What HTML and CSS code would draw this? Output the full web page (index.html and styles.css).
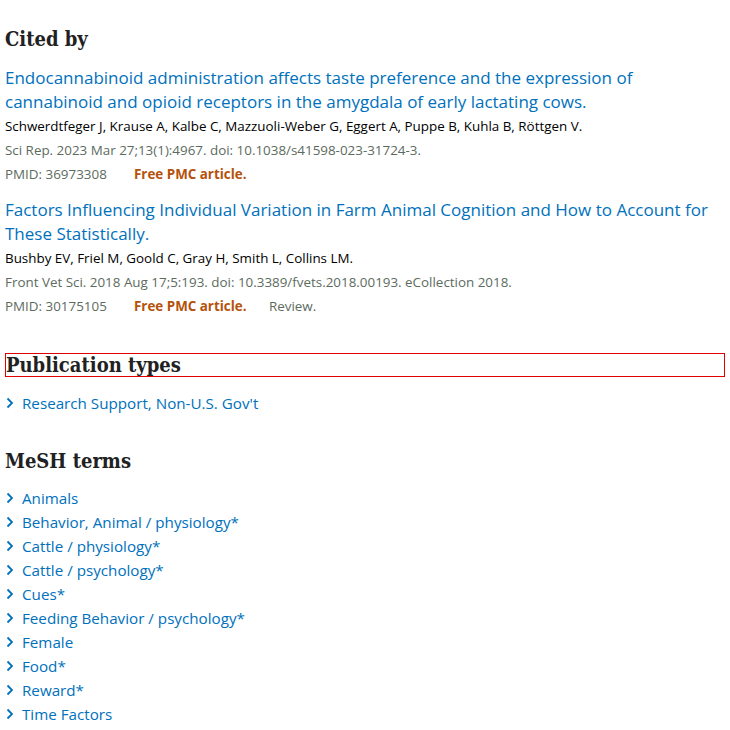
FILE: index.html
```html
<!DOCTYPE html>
<html lang="en">
<head>
<meta charset="utf-8">
<link rel="stylesheet" href="styles.css">
</head>
<body>
<main class="page">
  <section class="section cited">
    <h2 class="heading">Cited by</h2>
    <article class="doc">
      <a class="doc-title" href="#">Endocannabinoid administration affects taste preference and the expression of cannabinoid and opioid receptors in the amygdala of early lactating cows.</a>
      <div class="doc-authors">Schwerdtfeger J, Krause A, Kalbe C, Mazzuoli-Weber G, Eggert A, Puppe B, Kuhla B, Röttgen V.</div>
      <div class="doc-journal">Sci Rep. 2023 Mar 27;13(1):4967. doi: 10.1038/s41598-023-31724-3.</div>
      <div class="doc-meta"><span class="pmid">PMID: 36973308</span><span class="free">Free PMC article.</span></div>
    </article>
    <article class="doc">
      <a class="doc-title" href="#">Factors Influencing Individual Variation in Farm Animal Cognition and How to Account for These Statistically.</a>
      <div class="doc-authors">Bushby EV, Friel M, Goold C, Gray H, Smith L, Collins LM.</div>
      <div class="doc-journal">Front Vet Sci. 2018 Aug 17;5:193. doi: 10.3389/fvets.2018.00193. eCollection 2018.</div>
      <div class="doc-meta"><span class="pmid">PMID: 30175105</span><span class="free">Free PMC article.</span><span class="review">Review.</span></div>
    </article>
  </section>

  <section class="section">
    <h2 class="heading heading-boxed">Publication types</h2>
    <ul class="terms">
      <li><svg class="chev" viewBox="0 0 8 12"><path d="M1.5 1.5 L6 6 L1.5 10.5"/></svg><a href="#">Research Support, Non-U.S. Gov't</a></li>
    </ul>
  </section>

  <section class="section">
    <h2 class="heading">MeSH terms</h2>
    <ul class="terms">
      <li><svg class="chev" viewBox="0 0 8 12"><path d="M1.5 1.5 L6 6 L1.5 10.5"/></svg><a href="#">Animals</a></li>
      <li><svg class="chev" viewBox="0 0 8 12"><path d="M1.5 1.5 L6 6 L1.5 10.5"/></svg><a href="#">Behavior, Animal / physiology*</a></li>
      <li><svg class="chev" viewBox="0 0 8 12"><path d="M1.5 1.5 L6 6 L1.5 10.5"/></svg><a href="#">Cattle / physiology*</a></li>
      <li><svg class="chev" viewBox="0 0 8 12"><path d="M1.5 1.5 L6 6 L1.5 10.5"/></svg><a href="#">Cattle / psychology*</a></li>
      <li><svg class="chev" viewBox="0 0 8 12"><path d="M1.5 1.5 L6 6 L1.5 10.5"/></svg><a href="#">Cues*</a></li>
      <li><svg class="chev" viewBox="0 0 8 12"><path d="M1.5 1.5 L6 6 L1.5 10.5"/></svg><a href="#">Feeding Behavior / psychology*</a></li>
      <li><svg class="chev" viewBox="0 0 8 12"><path d="M1.5 1.5 L6 6 L1.5 10.5"/></svg><a href="#">Female</a></li>
      <li><svg class="chev" viewBox="0 0 8 12"><path d="M1.5 1.5 L6 6 L1.5 10.5"/></svg><a href="#">Food*</a></li>
      <li><svg class="chev" viewBox="0 0 8 12"><path d="M1.5 1.5 L6 6 L1.5 10.5"/></svg><a href="#">Reward*</a></li>
      <li><svg class="chev" viewBox="0 0 8 12"><path d="M1.5 1.5 L6 6 L1.5 10.5"/></svg><a href="#">Time Factors</a></li>
    </ul>
  </section>
</main>
</body>
</html>
```
FILE: styles.css
```css
html, body {
  margin: 0;
  padding: 0;
  background: #fff;
}
body {
  font-family: "Open Sans", "Noto Sans", sans-serif;
  color: #212121;
}
.page {
  padding: 25px 5px 0 5px;
}
.section {
  margin-bottom: 32px;
}
.cited {
  margin-bottom: 35px;
}
.heading {
  font-family: "DejaVu Serif Condensed", "DejaVu Serif", serif;
  font-weight: 700;
  font-size: 20px;
  line-height: 28px;
  margin: 0 0 11px 0;
  color: #212121;
}
.cited .heading {
  margin-bottom: 13px;
}
.heading-boxed {
  border: 1px solid #e00000;
  line-height: 22px;
  margin-bottom: 14px;
}
.doc {
  margin-bottom: 12px;
}
.doc-title {
  display: block;
  color: #0071bc;
  text-decoration: none;
  font-size: 17px;
  line-height: 24px;
}
.doc-authors {
  font-size: 13.4px;
  line-height: 24px;
  color: #000;
}
.doc-journal {
  font-size: 13.4px;
  line-height: 24px;
  color: #5c6b5e;
}
.doc-meta {
  display: flex;
  font-size: 13.4px;
  line-height: 24px;
  color: #5c6b5e;
}
.pmid {
  width: 129px;
}
.free {
  color: #b5520b;
  font-weight: 700;
  width: 135px;
}
.review {
  color: #5c6b5e;
}
.terms {
  list-style: none;
  margin: 0;
  padding: 0;
}
.terms li {
  display: flex;
  align-items: center;
  font-size: 15.2px;
  line-height: 24px;
}
.terms a {
  color: #0071bc;
  text-decoration: none;
}
.chev {
  width: 8px;
  height: 12px;
  margin: 0 8px 0 1px;
  fill: none;
  stroke: #0071bc;
  stroke-width: 1.8;
}
```
